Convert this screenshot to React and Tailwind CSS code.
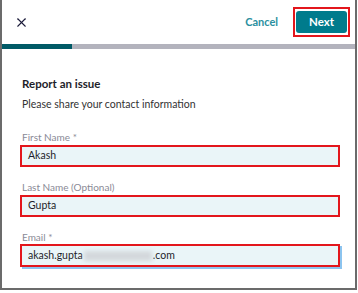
import { X } from 'lucide-react'

export default function App() {
  const fields = [
    { label: 'First Name *', value: 'Akash' },
    { label: 'Last Name (Optional)', value: 'Gupta' },
  ]

  return (
    <div className="w-[358px] h-[293px] bg-white overflow-hidden" style={{ fontFamily: 'Lato, "Noto Sans", sans-serif' }}>
      <div className="h-[290px] w-[357px] border-l-2 border-r-2 border-b-2 border-[#6b6b6b] bg-white">
        {/* Header */}
        <div className="flex items-center h-[44px] pl-[12px] pr-[5px]">
          <X className="w-[15px] h-[15px] text-[#1b1b3a]" strokeWidth={1.75} />
          <div className="ml-auto flex items-center">
            <button className="text-[11px] font-bold text-[#2a8fa0] mr-[15px] leading-[14px]">Cancel</button>
            <div className="border-2 border-[#e3161c] px-[1px] py-[2px]">
              <button className="block w-[51px] h-[22px] rounded-[3px] bg-[#007b8c] text-white text-[11.5px] font-bold leading-[14px]">Next</button>
            </div>
          </div>
        </div>

        {/* Progress */}
        <div className="flex h-[5px]">
          <div className="w-[70px] bg-[#005a66]" />
          <div className="flex-1 bg-[#b3b3bd]" />
        </div>

        {/* Form */}
        <div className="px-[18px] pt-[27px]">
          <h2 className="text-[11.5px] font-bold text-[#1e1e2a] pl-[2px] leading-[16px]">Report an issue</h2>
          <p className="text-[10.5px] text-[#333] mt-[5px] pl-[2px] leading-[14px]">Please share your contact information</p>

          <div className="mt-[19px] flex flex-col gap-[13px]">
            {fields.map((f) => (
              <div key={f.label}>
                <div className="text-[10px] text-[#8a8a96] pl-[2px] mb-[1px] leading-[14px]">{f.label}</div>
                <div className="w-[320px] h-[22px] border-2 border-[#e3161c] bg-[#eaf5f8] flex items-center pl-[6px]">
                  <span className="text-[10.5px] text-[#1e1e2a]">{f.value}</span>
                </div>
              </div>
            ))}
            <div>
              <div className="text-[10px] text-[#8a8a96] pl-[2px] leading-[14px]">Email *</div>
              <div className="w-[320px] h-[23px] border-2 border-[#e3161c] bg-[#eaf5f8] flex items-center pl-[6px] shadow-[2px_2px_0_#8cc4ef]">
                <span className="text-[10.5px] text-[#1e1e2a]">akash.gupta</span>
                <span className="inline-block w-[68px] h-[10px] bg-[#d4d8dc] blur-[2px] mx-[1px]" />
                <span className="text-[10.5px] text-[#1e1e2a]">.com</span>
              </div>
            </div>
          </div>
        </div>
      </div>
    </div>
  )
}
